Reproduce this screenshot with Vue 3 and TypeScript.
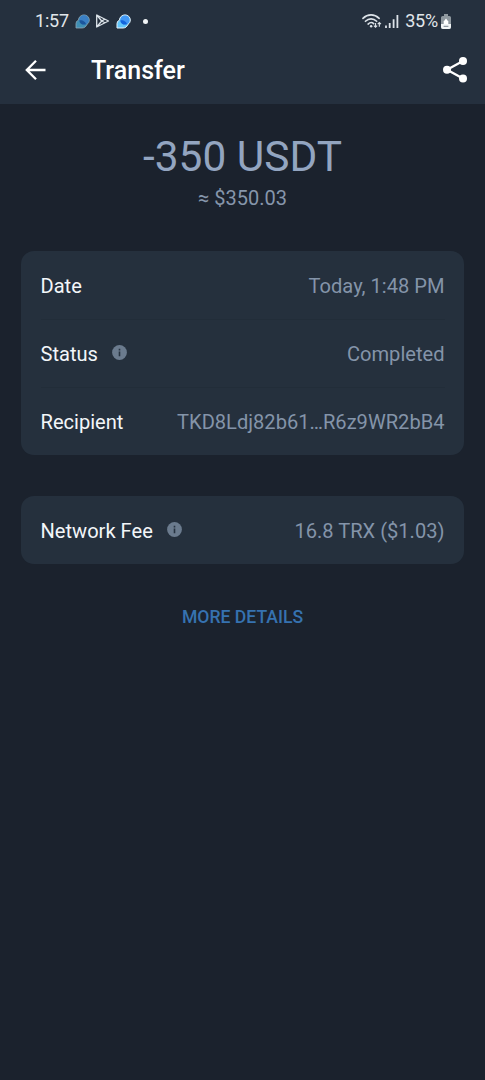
<script setup lang="ts">
interface Row {
  label: string
  value: string
  info?: boolean
  cls: string
}

const groups: Row[][] = [
  [
    { label: 'Date', value: 'Today, 1:48 PM', cls: 'date' },
    { label: 'Status', value: 'Completed', info: true, cls: 'status' },
    { label: 'Recipient', value: 'TKD8Ldj82b61…R6z9WR2bB4', cls: 'recipient' },
  ],
  [{ label: 'Network Fee', value: '16.8 TRX ($1.03)', info: true, cls: 'fee' }],
]
</script>

<template>
  <main class="screen">
    <header class="top">
      <div class="statusbar">
        <span class="clock">1:57</span>
        <svg class="bubble" width="15" height="15" viewBox="0 0 15 15">
          <path d="M1 14V9.500Q1 7 3.400 6.200C3.700 3 6 .9 9 .9c3 0 5.300 2.200 5.300 5.100 0 2-.9 3.400-2.300 4.300-.9 2.300-2.500 3.700-5 3.700Z" fill="#3f8fb4" stroke="#8fa6b8" stroke-width=".8" />
          <circle cx="9" cy="6" r="4.700" fill="#3a7fc4" />
          <path d="M4.300 6.400C7 5.600 10.600 7.500 11 10.300 7.500 11.300 4.500 9.500 4.300 6.400Z" fill="#1b569c" />
        </svg>
        <svg class="play" width="15" height="16" viewBox="0 0 15 16">
          <path d="M1.700 2v12L13.500 8ZM1.700 2l5 6-5 6M6.700 8l3.200-1.800M6.700 8l3.200 1.800" fill="none" stroke="#dce3e9" stroke-width="1.300" stroke-linejoin="round" />
        </svg>
        <svg class="bubble" width="15" height="15" viewBox="0 0 15 15">
          <path d="M1 14V9.500Q1 7 3.400 6.200C3.700 3 6 .9 9 .9c3 0 5.300 2.200 5.300 5.100 0 2-.9 3.400-2.300 4.300-.9 2.300-2.500 3.700-5 3.700Z" fill="#62c6fb" stroke="#e6f1fa" stroke-width="1" />
          <circle cx="9" cy="6" r="4.600" fill="#4197f5" />
          <path d="M4.300 6.400C7 5.600 10.600 7.500 11 10.300 7.500 11.300 4.500 9.500 4.300 6.400Z" fill="#1264dd" />
        </svg>
        <span class="dot"></span>
        <span class="spacer"></span>
        <svg class="wifi" width="20" height="16" viewBox="0 0 21 16">
          <g fill="none" stroke="#dce2e8" stroke-width="1.700" stroke-linecap="round">
            <path d="M1 5.200C6 .4 13 .4 18 5.200M3.600 8.300c3.500-3.400 8.300-3.400 11.800 0M6.400 11.200c1.900-1.800 4.400-1.800 5.800-.4" />
          </g>
          <circle cx="9.600" cy="13.600" r="1.300" fill="#dce2e8" />
          <path d="M14.200 10v4.400m-1.700-1.500 1.700 1.700 1.700-1.700M18.200 14V9.600m-1.700 1.700 1.700-1.700 1.700 1.700" fill="none" stroke="#dce2e8" stroke-width="1.200" />
        </svg>
        <svg class="signal" width="14" height="13" viewBox="0 0 14 13">
          <path d="M1 13v-2.600M4.700 13V8M8.600 13V4.300M12.400 13V0" fill="none" stroke="#dce2e8" stroke-width="1.800" />
        </svg>
        <span class="percent">35%</span>
        <svg class="battery" width="10" height="15" viewBox="0 0 10 15">
          <path d="M3 0h4v2h1.400Q10 2 10 3.600V13q0 2-2 2H2q-2 0-2-2V3.600Q0 2 1.600 2H3Z" fill="#8f989f" />
          <path d="M0 10h10v3q0 2-2 2H2q-2 0-2-2Z" fill="#f1f4f5" />
          <path d="M5 4.500 7.300 7.500V10H2.700V7.500Z" fill="#fff" />
          <path d="M2.600 12.300h4.800" stroke="#77818c" stroke-width="1" />
        </svg>
      </div>
      <div class="toolbar">
        <svg class="back" width="22" height="22" viewBox="0 0 22 22">
          <path d="M20.500 11H2M11 1.800 1.800 11l9.200 9.200" fill="none" stroke="#fff" stroke-width="2.300" />
        </svg>
        <h1>Transfer</h1>
        <svg class="share" width="26" height="28" viewBox="0 0 26 28">
          <path d="M21 5 5 13.700 21 22.600" fill="none" stroke="#fff" stroke-width="2.300" />
          <g fill="#fff">
            <circle cx="21" cy="5" r="4" />
            <circle cx="5" cy="13.700" r="4" />
            <circle cx="21" cy="22.600" r="4" />
          </g>
        </svg>
      </div>
    </header>

    <section class="summary">
      <div class="amount">-350 USDT</div>
      <div class="fiat">≈ $350.03</div>
    </section>

    <section v-for="(rows, i) in groups" :key="i" class="card">
      <div v-for="row in rows" :key="row.label" class="row" :class="row.cls">
        <span class="label">{{ row.label }}</span>
        <svg v-if="row.info" class="info" width="15" height="15" viewBox="0 0 15 15">
          <circle cx="7.500" cy="7.500" r="7.400" fill="#6b7b8e" />
          <path d="M7.500 6.600v4.600M7.500 3.700v1.700" stroke="#273341" stroke-width="1.600" />
        </svg>
        <span class="value">{{ row.value }}</span>
      </div>
    </section>

    <button class="more" type="button">MORE DETAILS</button>
  </main>
</template>

<style>
body {
  margin: 0;
  background: #1b222d;
}
</style>

<style scoped>
.screen {
  width: 485px;
  height: 1080px;
  overflow: hidden;
  background: #1b222d;
  color: #f3f6f9;
  font-family: Roboto, sans-serif;
  font-size: 20px;
}
svg {
  display: block;
  flex: none;
}
.top {
  height: 104px;
  background: #25303e;
}
.statusbar {
  display: flex;
  align-items: center;
  height: 42px;
  padding: 0 34px 0 35px;
}
.clock,
.percent {
  font-size: 18px;
  line-height: 20px;
  color: #e1e6ea;
}
.clock {
  width: 40px;
  letter-spacing: -0.2px;
}
.percent {
  letter-spacing: -0.2px;
}
.play {
  margin: 0 6px 0 5px;
}
.dot {
  width: 5px;
  height: 5px;
  margin-left: 12px;
  border-radius: 50%;
  background: #f1f4f6;
}
.spacer {
  flex: 1;
}
.signal {
  margin: 0 6px 0 3px;
}
.battery {
  margin-left: 3px;
}
.toolbar {
  display: flex;
  align-items: center;
  height: 56px;
  padding: 0 17px 0 25px;
}
.back {
  margin-top: -1px;
}
.share {
  margin-top: -1px;
}
h1 {
  flex: 1;
  margin: 1px 0 0 44px;
  font-size: 25px;
  font-weight: 500;
  line-height: 28px;
  color: #fff;
}
.summary {
  height: 147px;
  text-align: center;
  color: #93a5c0;
}
.amount {
  padding-top: 28px;
  font-size: 42.4px;
  line-height: 50px;
}
.fiat {
  padding-top: 4px;
  line-height: 24px;
  color: #8696ab;
}
.card {
  margin: 0 21px 41px;
  padding: 0 19.5px;
  border-radius: 13px;
  background: #25303d;
}
.row {
  display: flex;
  align-items: center;
  height: 68px;
  line-height: 24px;
  font-size: 20.1px;
  padding-top: 1px;
  box-sizing: border-box;
}
.row + .row {
  border-top: 1px solid #222d39;
  padding-top: 0;
}
.info {
  margin: -2px 0 0 14px;
}
.value {
  margin-left: auto;
  color: #8494a9;
  white-space: nowrap;
}
.more {
  display: block;
  margin: 0 auto;
  padding: 0;
  border: 0;
  background: none;
  font: 500 17.6px/24px Roboto, sans-serif;
  color: #3672b0;
}
</style>
